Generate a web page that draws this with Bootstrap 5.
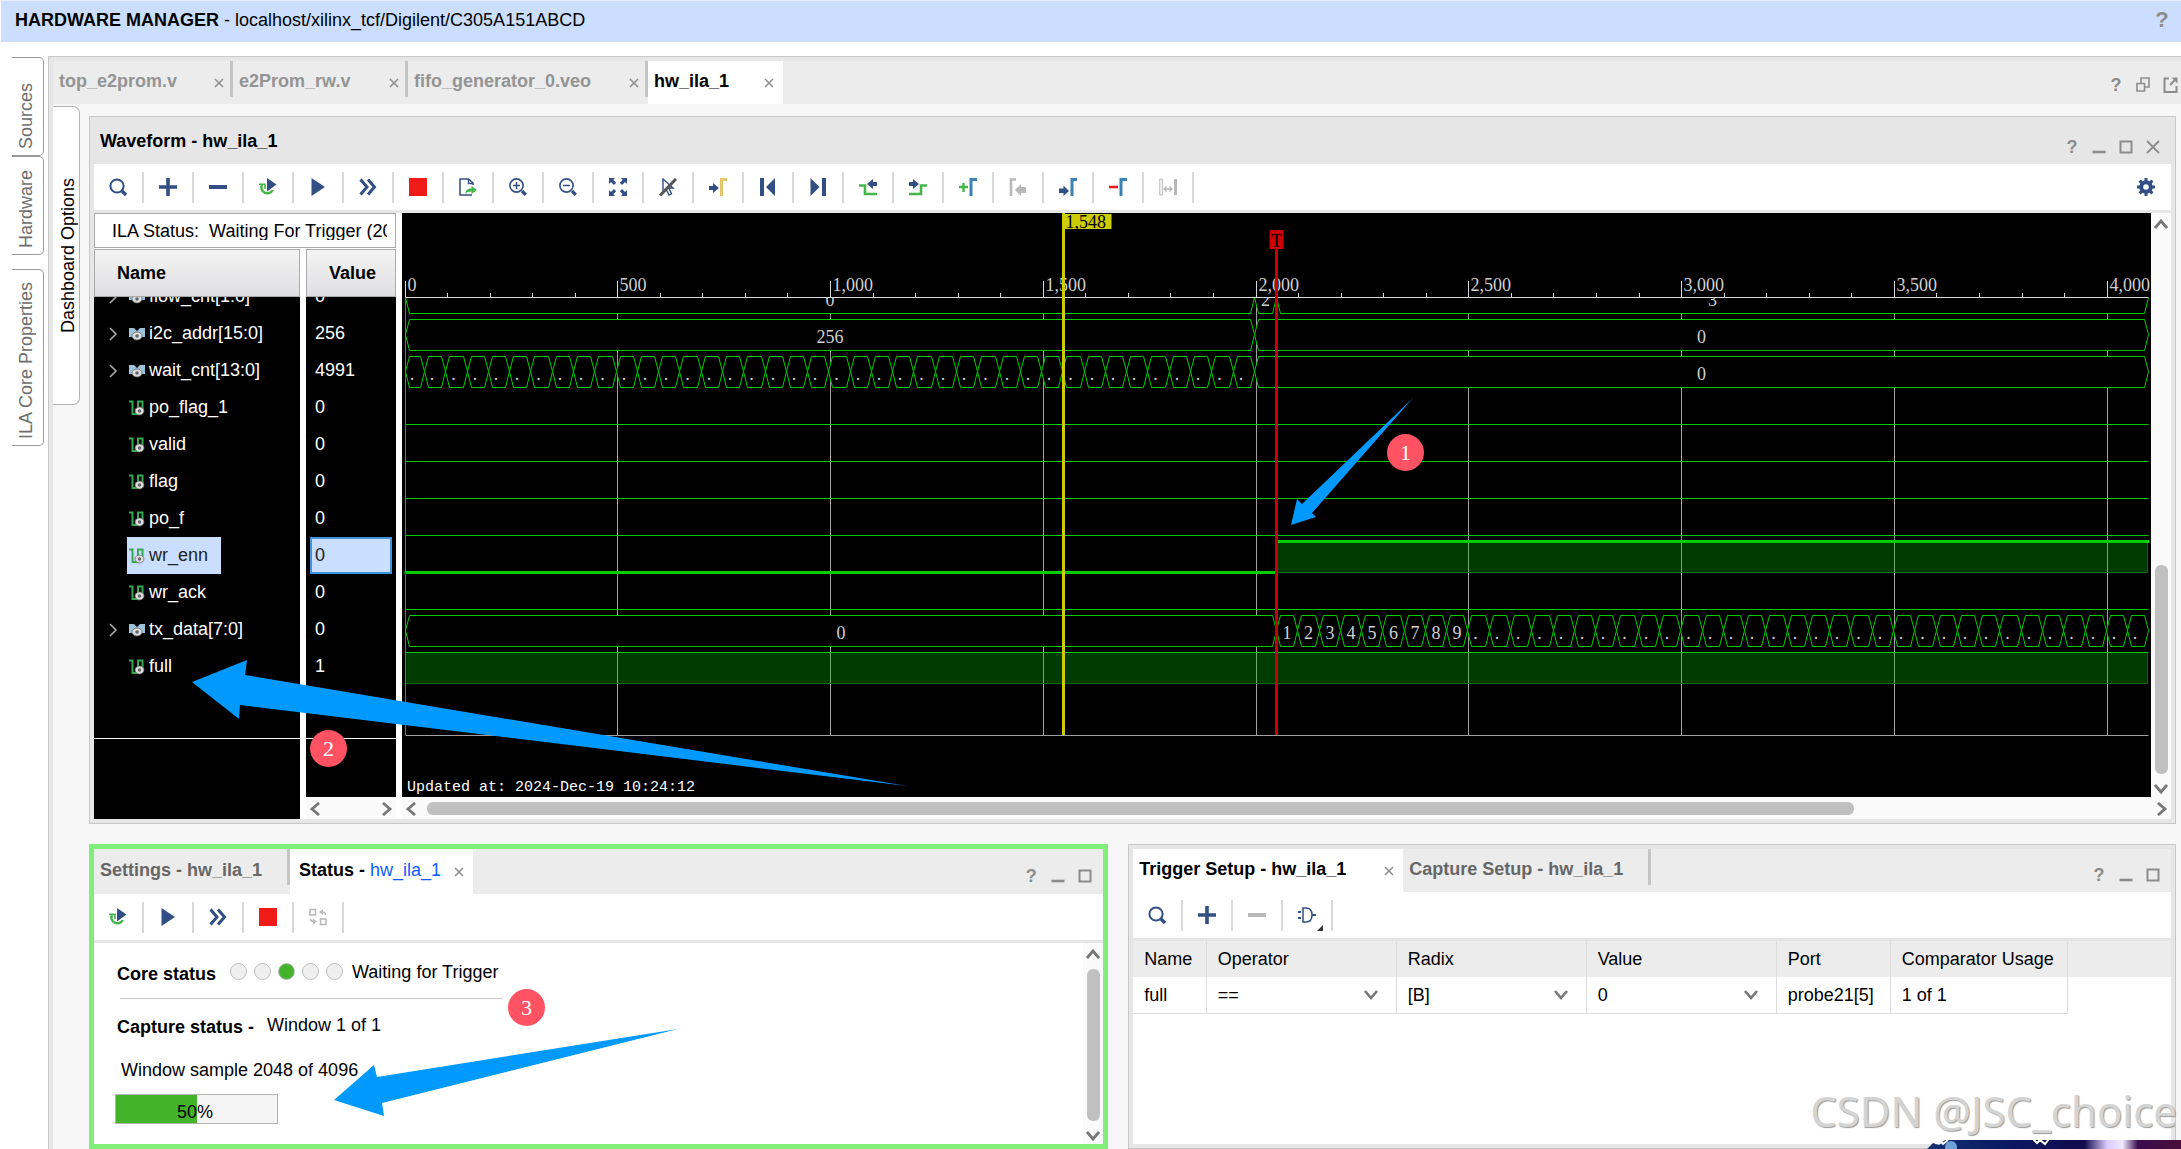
<!DOCTYPE html>
<html lang="en">
<head>
<meta charset="utf-8">
<meta name="viewport" content="width=device-width, initial-scale=1">
<title>Hardware Manager</title>
<link rel="stylesheet" href="https://cdn.jsdelivr.net/npm/bootstrap@5.3.0/dist/css/bootstrap.min.css">
<style>
:root{--navy:#324f85;--edge:#c8c8c8;--frame:#e6e6e6;--strip:#ececec;--go:#00cc00}
body{font-family:"Liberation Sans",Arial,sans-serif;font-size:18px;line-height:22px;color:#000;background:#fff}
button{border:0;background:none;padding:0;color:inherit;line-height:inherit}
svg{display:block;flex:none}
.ic{width:18px;height:18px}
.shrinkable{min-width:0}
.app-title{height:42px;background:#ccdeff;border-top:1px solid #e6efff;padding:0 10px 4px 14px;margin-left:1px}
.helpmark{font-weight:700;color:#8c8c8c;width:18px;text-align:center}
.app-title .helpmark{font-size:22px}
.side{width:48px;padding:15px 5px 0 12px}
.side-tab{border:1px solid #999;border-left:0;border-radius:0 5px 5px 0;color:#6e6e6e;width:32px;height:99px;display:flex;align-items:flex-end;justify-content:center;padding-bottom:6px;padding-right:4px}
.side-tab.tall{height:177px;margin-top:14px}
.side-tab span,.dash-tab span{writing-mode:vertical-rl;transform:rotate(180deg);white-space:nowrap}
.dash-tab{width:27px;height:299px;margin-top:2px;padding-left:3px;background:#fff;border:1px solid #b4b4b4;border-left:0;border-radius:0 7px 7px 0;display:flex;align-items:center;justify-content:center}
.pane{border:1px solid var(--edge);background:var(--frame);padding:4px}
.main-pane{border-width:1px 0 0 1px;padding:4px 0 0 4px;margin-top:14px}
.surface{background:#f7f7f7}
.board{padding:12px 5px 0 9px}
.tabstrip{background:var(--strip);height:43px}
.tab{position:relative;display:flex;align-items:flex-start;justify-content:space-between;padding:9px 9px 0 6px;font-weight:700;color:#949494;height:43px;white-space:nowrap}
.tab.dark-label{color:#666}
.tab.on{background:#fff;color:#000}
.tab.on.inset{padding-left:9px}
.tab a{color:#0d5dff}
.tab.split::after{content:"";position:absolute;right:0;top:0;width:3px;height:36px;background:#c4c4c4}
.close{width:10px;height:10px;color:#8c8c8c;margin-top:8px}
.wctl{gap:9px;color:#8c8c8c;padding-right:9px}
.wctl.edge{padding-right:2px}
.pane-title{height:43px;padding-left:6px;font-weight:700}
.pane-title>span{padding-bottom:3px}
.toolbar{height:46px;background:#fff;color:var(--navy);margin-bottom:3px}
.tool{width:50px;height:31px;border-right:2px solid #d9d9d9;display:flex;align-items:center;justify-content:center;position:relative}
.tool:disabled{color:#b8b8b8}
.wavebody{position:relative;background:#fff;height:606px}
.leftcols{width:302px;margin-right:6px}
.cols{gap:6px}
.ila{height:35px;border:1px solid #aaa;background:#fff;padding:6px 8px 0 17px;margin-bottom:1px}
.ila div{overflow:hidden;white-space:pre;height:20px}
.colhead{height:48px;border:1px solid #aaa;background:linear-gradient(#f4f4f4,#dedee1);font-weight:700;padding:12px 22px}
.names{width:206px}.vals{width:90px}
.list{background:#000;color:#fff;overflow:hidden;position:relative}
.list::after{content:"";position:absolute;left:0;right:0;top:441px;border-top:1px solid #fff}
.rows{margin-top:-19px}
.sig{height:37px;padding-left:11px}
.sig .tw{width:16px;height:16px;margin-right:6px}
.sig .lab{padding:0 13px 0 2px;height:37px;gap:4px}
.sig .lab span{padding-bottom:2px}
.sig.sel .lab{background:#cadeff;color:#222}
.val{height:37px;padding:7px 0 0 9px}
.val.sel{margin:0 4px;padding:5px 0 0 3px;background:#cadeff;color:#222;border:2px solid #3f94dd}
.bar{background:#fafafa;color:#777}
.bar .ic{width:14px;height:14px}
.hbar{height:22px;padding:1px 3px 0;gap:8px}
.vbar{width:20px;padding:5px 0 2px;gap:7px}
.thumb{background:#c0c0c0;border-radius:6px;min-width:13px;min-height:13px}
.wave{background:#000;height:584px;width:100%}
.wave text{font-family:"Liberation Serif",serif;font-size:18px;fill:#d0d0d0}
.wave .ink{fill:#000}
.wave .stamp{font-family:"Liberation Mono",monospace;font-size:15px;fill:#fff}
.note{position:absolute;overflow:visible;pointer-events:none;z-index:3}
.note path{fill:#0099ff}
.note-a{left:1197px;top:185px}.note-b{left:98px;top:447px}.note-c{left:240px;top:180px}
.pin{position:absolute;z-index:4;width:37px;height:37px;border-radius:50%;background:#ff5263;color:#fff;font:22px/37px "Liberation Serif",serif;text-align:center}
.pin-a{left:1293px;top:221px}.pin-b{left:216px;top:517px}.pin-c{left:414px;top:140px}
.lower{gap:20px;margin-top:20px}
.p-left{flex:1019 1 0;border:5px solid #80ef79;position:relative;min-width:0;background:#fff}
.p-right{flex:1048 1 0;min-width:0}
.p-left .tabstrip,.p-left .tab{height:45px}
.p-left .tab{padding-top:10px}
.status-body{border-top:3px solid #e6e6e6}
.lamp{width:17px;height:17px;border-radius:50%;background:#efefef;border:1px solid #bdbdbd}
.lamp.lit{background:#43b32a}
.core{gap:7px;padding:18px 0 16px 23px;height:55px}
.core strong{padding:4px 7px 0 0}
.core .state{padding-left:2px}
.core-rule{width:383px;border-top:1px solid #c8c8c8;margin-left:26px}
.capt{gap:13px;padding:15px 0 0 23px}
.capt strong{padding-top:2px}
.sample{padding:21px 0 0 27px}
.progress.cap{width:163px;height:30px;border:1px solid #b4b4b4;border-radius:0;background:#f5f5f5;position:relative;margin:13px 0 0 21px;font-size:18px}
.cap .progress-bar{background:#43b32a}
.cap b{position:absolute;inset:6px 3px 0 0;text-align:center;color:#000;font-weight:400}
.trig{--bs-table-bg:transparent;margin:0;color:#000;table-layout:fixed;background:#fff}
.trig th,.trig td{height:36px;padding:0 11px;font-weight:400;vertical-align:middle;border:0 solid #dcdcdc;border-right-width:1px;white-space:nowrap;color:#000}
.trig th{background:var(--strip)}
.trig td{border-bottom-width:1px}
.trig th:last-child,.trig td:last-child{border:0}
.c-name{width:73px}.c-pick{width:190px}.c-port{width:114px}.c-use{width:177px}
.trig .form-select{border:0;padding:0 26px 0 0;font-size:18px;line-height:22px;color:#000;background-color:transparent;border-radius:0;background-position:right 6px center;background-size:16px 12px;--bs-form-select-bg-img:url("data:image/svg+xml,%3csvg xmlns='http://www.w3.org/2000/svg' viewBox='0 0 16 12'%3e%3cpath d='M2 2l6 7 6-7' fill='none' stroke='%23777' stroke-width='2.6'/%3e%3c/svg%3e")}
.credit{position:absolute;right:4px;bottom:9px;font:42px/58px "Noto Sans",sans-serif;color:#d4d4d4;text-shadow:1px 1px 1px #999,-1px -1px 0 #fff;white-space:nowrap;z-index:5}
.thumbstrip{position:absolute;right:0;bottom:0;z-index:4}
</style>
</head>
<body class="d-flex flex-column min-vh-100 overflow-hidden position-relative">

<svg width="0" height="0" class="position-absolute" aria-hidden="true">
  <symbol id="i-search" viewBox="0 0 18 18"><circle cx="8" cy="8" r="6.600" fill="none" stroke="currentColor" stroke-width="2"/><path d="M13 13l4 4" stroke="currentColor" stroke-width="3.400"/></symbol>
  <symbol id="i-plus" viewBox="0 0 18 18"><path d="M0 9h18M9 0v18" stroke="currentColor" stroke-width="3.600"/></symbol>
  <symbol id="i-minus" viewBox="0 0 18 18"><path d="M0 9h18" stroke="currentColor" stroke-width="4"/></symbol>
  <symbol id="i-rerun" viewBox="0 0 18 18"><path d="M3 6.500A6 6 0 1 0 13.800 12" fill="none" stroke="#43b649" stroke-width="2.400"/><path d="M0 6.200h6v4.800" fill="none" stroke="#43b649" stroke-width="1.600"/><path d="M8 0l9.500 6.500L8 13.500z" fill="currentColor"/></symbol>
  <symbol id="i-play" viewBox="0 0 18 18"><path d="M2.500 0L16 9 2.500 18z" fill="currentColor"/></symbol>
  <symbol id="i-ff" viewBox="0 0 18 18"><path d="M1.500 1.500L8 9l-6.500 7.500M9 1.500L15.500 9 9 16.500" fill="none" stroke="currentColor" stroke-width="3"/></symbol>
  <symbol id="i-stop" viewBox="0 0 18 18"><path d="M0 0h18v18H0z" fill="#ee1b18"/></symbol>
  <symbol id="i-export" viewBox="0 0 18 18"><path d="M14 7V5L9.500 1H1v16h12" fill="none" stroke="currentColor" stroke-width="1.500"/><path d="M9.500 1v4.500H14" fill="none" stroke="currentColor" stroke-width="1.300"/><path d="M6.500 16c0-4 2-5.500 6-5.500V8l5.500 4-5.500 4v-2.600c-3 0-4.500.6-6 2.600z" fill="#43b649"/></symbol>
  <symbol id="i-zin" viewBox="0 0 18 18"><circle cx="7.500" cy="7.500" r="6.600" fill="none" stroke="currentColor" stroke-width="1.600"/><path d="M4 7.500h7M7.500 4v7" stroke="currentColor" stroke-width="1.500"/><path d="M13 13l3.800 3.800" stroke="currentColor" stroke-width="3.200"/></symbol>
  <symbol id="i-zout" viewBox="0 0 18 18"><circle cx="7.500" cy="7.500" r="6.600" fill="none" stroke="currentColor" stroke-width="1.600"/><path d="M4 7.500h7" stroke="currentColor" stroke-width="1.500"/><path d="M13 13l3.800 3.800" stroke="currentColor" stroke-width="3.200"/></symbol>
  <symbol id="i-fit" viewBox="0 0 18 18"><path d="M0 0h6L4.300 1.800 7.200 4.700 4.900 7 2 4.100 0 6zM18 0v6l-2-1.900L13.100 7l-2.300-2.300 2.900-2.900L12 0zM0 18v-6l2 1.900L4.900 11l2.300 2.300-2.900 2.900L6 18zM18 18h-6l1.700-1.800-2.900-2.900 2.300-2.300 2.900 2.900L18 12z" fill="currentColor"/></symbol>
  <symbol id="i-nocursor" viewBox="0 0 18 18"><path d="M4 1v13l3-3 3 6 2.500-1.300L9.800 10H14z" fill="none" stroke="currentColor" stroke-width="1.400"/><path d="M1 17.500L17 1" stroke="#555" stroke-width="3"/></symbol>
  <symbol id="i-tocursor" viewBox="0 0 18 18"><path d="M0 8h4V5l6 5-6 5v-3H0z" fill="currentColor"/><path d="M12.500 18V1.500H18" fill="none" stroke="#e2c766" stroke-width="3"/></symbol>
  <symbol id="i-first" viewBox="0 0 18 18"><path d="M1 0h4v18H1zM16 0v18L7 9z" fill="currentColor"/></symbol>
  <symbol id="i-last" viewBox="0 0 18 18"><path d="M13 0h4v18h-4zM1.500 0v18l9-9z" fill="currentColor"/></symbol>
  <symbol id="i-prevtr" viewBox="0 0 18 18"><path d="M18 4h-4V1L8 6l6 5V8h4z" fill="currentColor"/><path d="M0 7.500h6V16h12" fill="none" stroke="#43b649" stroke-width="2.600"/></symbol>
  <symbol id="i-nexttr" viewBox="0 0 18 18"><path d="M0 4h4V1l6 5-6 5V8H0z" fill="currentColor"/><path d="M0 16h12V7.500h6" fill="none" stroke="#43b649" stroke-width="2.600"/></symbol>
  <symbol id="i-addmk" viewBox="0 0 18 18"><path d="M0 9h9M4.500 5v9" stroke="#43b649" stroke-width="2.400"/><path d="M12 18V1.500h6" fill="none" stroke="#3a82b5" stroke-width="3"/></symbol>
  <symbol id="i-prevmk" viewBox="0 0 18 18"><path d="M2 18V1.500h5" fill="none" stroke="currentColor" stroke-width="2.600"/><path d="M17 9h-5V6l-6 6 6 6v-3h5z" fill="currentColor"/></symbol>
  <symbol id="i-nextmk" viewBox="0 0 18 18"><path d="M0 10.500h4.500v-3L10 13l-5.500 5v-3H0z" fill="currentColor"/><path d="M13 18V1.500h5" fill="none" stroke="#3a82b5" stroke-width="3"/></symbol>
  <symbol id="i-delmk" viewBox="0 0 18 18"><path d="M0 9h9" stroke="#ee1b24" stroke-width="2.600"/><path d="M12 18V1.500h6" fill="none" stroke="#3a82b5" stroke-width="3"/></symbol>
  <symbol id="i-span" viewBox="0 0 18 18"><path d="M.8 1h2.500v16H.8z" fill="none" stroke="currentColor"/><path d="M15 1h3v16h-3z" fill="currentColor"/><path d="M5 11h8M7.500 8.500L5 11l2.500 2.500M10.500 8.500L13 11l-2.500 2.500" fill="none" stroke="currentColor" stroke-width="1.300"/></symbol>
  <symbol id="i-gear" viewBox="0 0 18 18"><circle cx="9" cy="9" r="4.800" fill="none" stroke="currentColor" stroke-width="4"/><path d="M9 0v4M9 14v4M0 9h4M14 9h4M2.600 2.600l3 3M12.400 12.400l3 3M2.600 15.400l3-3M12.400 5.600l3-3" stroke="currentColor" stroke-width="3"/></symbol>
  <symbol id="i-swap" viewBox="0 0 18 18"><path d="M1 1.500h5.500V7H1zM11.500 11H17v5.500h-5.500z" fill="none" stroke="currentColor" stroke-width="1.600"/><path d="M16.500 7c0-2-1-3-4-3M1.500 11c0 2 1 2.500 4 2.500" fill="none" stroke="currentColor" stroke-width="1.600"/><path d="M10 4l4-3v6zM8 13.500l-4-3v6z" fill="currentColor"/></symbol>
  <symbol id="i-gate" viewBox="0 0 18 18"><path d="M5 2h3c4 0 6 3 6 7s-2 7-6 7H5z" fill="none" stroke="currentColor" stroke-width="1.500"/><path d="M14 9h4M0 6h3M0 12h3" stroke="currentColor" stroke-width="2"/></symbol>
  <symbol id="i-x" viewBox="0 0 10 10"><path d="M1 1l8 8M9 1l-8 8" stroke="currentColor" stroke-width="1.500"/></symbol>
  <symbol id="i-bigx" viewBox="0 0 18 18"><path d="M3 3l12 12M15 3L3 15" stroke="currentColor" stroke-width="1.800"/></symbol>
  <symbol id="i-min" viewBox="0 0 18 18"><path d="M2.500 14h13" stroke="currentColor" stroke-width="2.600"/></symbol>
  <symbol id="i-max" viewBox="0 0 18 18"><path d="M3.500 3.500h11v11h-11z" fill="none" stroke="currentColor" stroke-width="2"/></symbol>
  <symbol id="i-restore" viewBox="0 0 18 18"><path d="M3 7.500h7.500V15H3z" fill="none" stroke="currentColor" stroke-width="1.600"/><path d="M7 7V2h8v9h-4" fill="none" stroke="currentColor" stroke-width="1.600"/></symbol>
  <symbol id="i-pop" viewBox="0 0 18 18"><path d="M8 2.500H3.500V16h12V10" fill="none" stroke="currentColor" stroke-width="2"/><path d="M9 9l5-5" stroke="currentColor" stroke-width="2"/><path d="M10.500 1.500h6v6z" fill="currentColor"/></symbol>
  <symbol id="i-up" viewBox="0 0 14 14"><path d="M1 10l6-7 6 7" fill="none" stroke="currentColor" stroke-width="2.800"/></symbol>
  <symbol id="i-down" viewBox="0 0 14 14"><path d="M1 4l6 7 6-7" fill="none" stroke="currentColor" stroke-width="2.800"/></symbol>
  <symbol id="i-left" viewBox="0 0 14 14"><path d="M10 1L3 7l7 6" fill="none" stroke="currentColor" stroke-width="2.800"/></symbol>
  <symbol id="i-right" viewBox="0 0 14 14"><path d="M4 1l7 6-7 6" fill="none" stroke="currentColor" stroke-width="2.800"/></symbol>
  <symbol id="i-tw" viewBox="0 0 16 16"><path d="M5 2l6 6-6 6" fill="none" stroke="#aaa" stroke-width="1.600"/></symbol>
  <symbol id="i-bus" viewBox="0 0 16 16"><path d="M0 2h5l3 3 3-3h5v9h-4l-4-2-4 2H0z" fill="#9cc3dc"/><ellipse cx="8" cy="10" rx="5" ry="4" fill="#ddd" stroke="#666" stroke-width=".8"/><circle cx="8" cy="10" r="1.800" fill="#666"/></symbol>
  <symbol id="i-bit" viewBox="0 0 16 16"><path d="M0 1.500h3.500V14H9V1.500h4.500V12" fill="none" stroke="#36a852" stroke-width="2"/><ellipse cx="10.500" cy="11" rx="4.500" ry="4" fill="#ddd" stroke="#666" stroke-width=".8"/><circle cx="10.500" cy="11" r="1.700" fill="#666"/></symbol>
</svg>

<header class="app-title d-flex align-items-center justify-content-between">
  <div><strong>HARDWARE MANAGER</strong> - localhost/xilinx_tcf/Digilent/C305A151ABCD</div>
  <button class="helpmark" aria-label="Help">?</button>
</header>

<div class="d-flex flex-grow-1">
  <nav class="side flex-shrink-0" aria-label="Side views">
    <button class="side-tab"><span>Sources</span></button>
    <button class="side-tab"><span>Hardware</span></button>
    <button class="side-tab tall"><span>ILA Core Properties</span></button>
  </nav>

  <main class="pane main-pane shrinkable flex-grow-1 d-flex flex-column">
    <div class="tabstrip d-flex align-items-center justify-content-between">
      <div class="d-flex" id="filetabs"></div>
      <div class="d-flex align-items-center wctl edge pt-1">
        <button class="helpmark" aria-label="Help">?</button>
        <button aria-label="Restore"><svg class="ic"><use href="#i-restore"/></svg></button>
        <button aria-label="Pop out"><svg class="ic"><use href="#i-pop"/></svg></button>
      </div>
    </div>

    <div class="surface flex-grow-1 d-flex">
      <button class="dash-tab flex-shrink-0"><span>Dashboard Options</span></button>
      <div class="board shrinkable flex-grow-1 d-flex flex-column">

        <section class="pane">
          <div class="pane-title d-flex align-items-center justify-content-between">
            <span>Waveform - hw_ila_1</span>
            <div class="d-flex align-items-center wctl pt-2">
              <button class="helpmark" aria-label="Help">?</button>
              <button aria-label="Minimize"><svg class="ic"><use href="#i-min"/></svg></button>
              <button aria-label="Maximize"><svg class="ic"><use href="#i-max"/></svg></button>
              <button aria-label="Close"><svg class="ic"><use href="#i-bigx"/></svg></button>
            </div>
          </div>
          <div class="toolbar d-flex align-items-center">
            <div class="d-flex" id="wavetools"></div>
            <button class="ms-auto me-3" aria-label="Settings"><svg class="ic"><use href="#i-gear"/></svg></button>
          </div>

          <div class="wavebody d-flex">
            <div class="leftcols d-flex flex-column flex-shrink-0">
              <div class="ila"><div>ILA Status:  Waiting For Trigger (2048 out of 4096)</div></div>
              <div class="cols d-flex flex-grow-1">
                <div class="names d-flex flex-column">
                  <div class="colhead">Name</div>
                  <div class="list flex-grow-1"><div class="rows" id="names"></div></div>
                </div>
                <div class="vals d-flex flex-column">
                  <div class="colhead">Value</div>
                  <div class="list flex-grow-1"><div class="rows" id="vals"></div></div>
                  <div class="bar hbar d-flex align-items-center justify-content-between">
                    <button aria-label="Scroll left"><svg class="ic"><use href="#i-left"/></svg></button>
                    <button aria-label="Scroll right"><svg class="ic"><use href="#i-right"/></svg></button>
                  </div>
                </div>
              </div>
            </div>
            <div class="shrinkable flex-grow-1 d-flex flex-column">
              <div class="d-flex">
                <div class="shrinkable flex-grow-1"><svg class="wave" id="wave" role="img" aria-label="Waveform"></svg></div>
                <div class="bar vbar d-flex flex-column align-items-center">
                  <button aria-label="Scroll up"><svg class="ic"><use href="#i-up"/></svg></button>
                  <div class="flex-grow-1 d-flex align-items-end"><div class="thumb" style="height:39%"></div></div>
                  <button aria-label="Scroll down"><svg class="ic"><use href="#i-down"/></svg></button>
                </div>
              </div>
              <div class="bar hbar d-flex align-items-center">
                <button aria-label="Scroll left"><svg class="ic"><use href="#i-left"/></svg></button>
                <div class="flex-grow-1"><div class="thumb" style="width:83%"></div></div>
                <button aria-label="Scroll right"><svg class="ic"><use href="#i-right"/></svg></button>
              </div>
            </div>
            <svg class="note note-a" width="123" height="128"><path d="M0 127L6 101l5 5L122 0 21 115l4 4z"/></svg>
            <svg class="note note-b" width="716" height="127"><path d="M0 22L55 0l-2 15L715 126 48 45l-1 14z"/></svg>
            <div class="pin pin-a">1</div>
            <div class="pin pin-b">2</div>
          </div>
        </section>

        <div class="lower d-flex flex-grow-1">
          <section class="p-left d-flex flex-column">
            <div class="tabstrip d-flex align-items-center justify-content-between">
              <div class="d-flex">
                <div class="tab dark-label split" style="width:196px"><span>Settings - hw_ila_1</span></div>
                <div class="tab on inset" style="width:183px"><span>Status - <a href="#" class="text-decoration-none fw-normal">hw_ila_1</a></span><button class="close" aria-label="Close tab"><svg width="10" height="10"><use href="#i-x"/></svg></button></div>
              </div>
              <div class="d-flex align-items-center wctl pt-2">
                <button class="helpmark" aria-label="Help">?</button>
                <button aria-label="Minimize"><svg class="ic"><use href="#i-min"/></svg></button>
                <button aria-label="Maximize"><svg class="ic"><use href="#i-max"/></svg></button>
              </div>
            </div>
            <div class="toolbar d-flex align-items-center m-0" id="stattools"></div>
            <div class="status-body d-flex flex-grow-1">
              <div class="flex-grow-1">
                <div class="core d-flex align-items-center">
                  <strong>Core status</strong>
                  <span class="lamp"></span><span class="lamp"></span><span class="lamp lit"></span><span class="lamp"></span><span class="lamp"></span>
                  <span class="state">Waiting for Trigger</span>
                </div>
                <div class="core-rule"></div>
                <div class="capt d-flex"><strong>Capture status -</strong><span>Window 1 of 1</span></div>
                <div class="sample">Window sample 2048 of 4096</div>
                <div class="progress cap" role="progressbar" aria-label="Window sample" aria-valuenow="50" aria-valuemin="0" aria-valuemax="100"><div class="progress-bar" style="width:50%"></div><b>50%</b></div>
              </div>
              <div class="bar vbar d-flex flex-column align-items-center">
                <button aria-label="Scroll up"><svg class="ic"><use href="#i-up"/></svg></button>
                <div class="flex-grow-1 d-flex"><div class="thumb"></div></div>
                <button aria-label="Scroll down"><svg class="ic"><use href="#i-down"/></svg></button>
              </div>
            </div>
            <svg class="note note-c" width="345" height="87"><path d="M0 71L40 36l3 12L344 0 48 74l2 13z"/></svg>
            <div class="pin pin-c">3</div>
          </section>

          <section class="pane p-right d-flex flex-column">
            <div class="tabstrip d-flex align-items-center justify-content-between">
              <div class="d-flex">
                <div class="tab on" style="width:270px"><span>Trigger Setup - hw_ila_1</span><button class="close" aria-label="Close tab"><svg width="10" height="10"><use href="#i-x"/></svg></button></div>
                <div class="tab dark-label split" style="width:248px"><span>Capture Setup - hw_ila_1</span></div>
              </div>
              <div class="d-flex align-items-center wctl pt-2">
                <button class="helpmark" aria-label="Help">?</button>
                <button aria-label="Minimize"><svg class="ic"><use href="#i-min"/></svg></button>
                <button aria-label="Maximize"><svg class="ic"><use href="#i-max"/></svg></button>
              </div>
            </div>
            <div class="toolbar d-flex align-items-center" id="trigtools"></div>
            <div class="flex-grow-1 bg-white">
              <table class="table trig">
                <thead><tr><th class="c-name">Name</th><th class="c-pick">Operator</th><th class="c-pick">Radix</th><th class="c-pick">Value</th><th class="c-port">Port</th><th class="c-use">Comparator Usage</th><th></th></tr></thead>
                <tbody><tr><td>full</td>
                  <td><select class="form-select" aria-label="Operator"><option>==</option><option>!=</option></select></td>
                  <td><select class="form-select" aria-label="Radix"><option>[B]</option><option>[H]</option></select></td>
                  <td><select class="form-select" aria-label="Value"><option>0</option><option>1</option></select></td>
                  <td>probe21[5]</td><td>1 of 1</td><td></td></tr></tbody>
              </table>
            </div>
          </section>
        </div>
      </div>
    </div>
  </main>
</div>

<svg class="thumbstrip" width="256" height="10" viewBox="0 0 256 10" aria-hidden="true">
  <defs><linearGradient id="sky"><stop offset="0" stop-color="#12306f"/><stop offset=".3" stop-color="#0a1a63"/><stop offset=".62" stop-color="#120a4c"/><stop offset=".71" stop-color="#d9ccff"/><stop offset=".77" stop-color="#f0e8ff"/><stop offset=".83" stop-color="#3a0d4e"/><stop offset="1" stop-color="#4a0d3a"/></linearGradient></defs>
  <path d="M2 10L8 4l6 2 6-5h236v9z" fill="url(#sky)"/><circle cx="26" cy="8" r="6" fill="#6fa0d8"/><path d="M8 1l3 3 3-3 4 4 5-4M108 0l4 4 3-3 5 4 4-5" stroke="#fff" stroke-width="2" fill="none"/>
</svg>
<div class="credit">CSDN @JSC_choice</div>

<script src="https://cdn.jsdelivr.net/npm/bootstrap@5.3.0/dist/js/bootstrap.bundle.min.js"></script>
<script>
const $ = id => document.getElementById(id);

// editor tabs: label, width
$('filetabs').innerHTML = [['top_e2prom.v',180],['e2Prom_rw.v',175],['fifo_generator_0.veo',240],['hw_ila_1',135]]
  .map(([t,w],i) => `<div class="tab ${i==3?'on':'split'}" style="width:${w}px"><span>${t}</span><button class="close" aria-label="Close ${t}"><svg width="10" height="10"><use href="#i-x"/></svg></button></div>`).join('');

// toolbars: icon names, a leading "-" marks a disabled tool
const tools = (id, list) => $(id).innerHTML = list.split(' ').map(n => {
  const off = n[0] == '-'; if (off) n = n.slice(1);
  const corner = n == 'gate' ? '<svg class="position-absolute bottom-0 end-0 me-2" width="6" height="6"><path d="M6 0v6H0z" fill="#333"/></svg>' : '';
  return `<button class="tool" aria-label="${n}" ${off?'disabled':''}><svg class="ic"><use href="#i-${n}"/></svg>${corner}</button>`;
}).join('');
tools('wavetools','search plus minus rerun play ff stop export zin zout fit nocursor tocursor first last prevtr nexttr addmk -prevmk nextmk delmk -span');
tools('stattools','rerun play ff stop -swap');
tools('trigtools','search plus -minus gate');

// probes: name, value, is a bus
const probes = [['flow_cnt[1:0]','0',1],['i2c_addr[15:0]','256',1],['wait_cnt[13:0]','4991',1],['po_flag_1','0'],['valid','0'],['flag','0'],['po_f','0'],['wr_enn','0'],['wr_ack','0'],['tx_data[7:0]','0',1],['full','1']];
$('names').innerHTML = probes.map(([n,v,b]) => `<div class="sig d-flex align-items-center ${n=='wr_enn'?'sel':''}"><svg class="tw">${b?'<use href="#i-tw"/>':''}</svg><div class="lab d-flex align-items-center"><svg width="16" height="16"><use href="#i-${b?'bus':'bit'}"/></svg><span>${n}</span></div></div>`).join('');
$('vals').innerHTML = probes.map(([n,v]) => `<div class="val ${n=='wr_enn'?'sel':''}">${v}</div>`).join('');

// waveform canvas, redrawn for the width at hand
function draw() {
  const W = $('wave').clientWidth, k = (W - 6) / 4096;
  const X = v => Math.floor(3 + v * k) + .5, top = r => 69.5 + 37 * r;
  let s = '';
  const line = (x1,y1,x2,y2,c,w=1) => s += `<path d="M${x1} ${y1}L${x2} ${y2}" stroke="${c}" stroke-width="${w}"/>`;
  const text = (x,y,t,a='middle',c='') => s += `<text x="${x}" y="${y}" text-anchor="${a}" class="${c}">${t}</text>`;
  for (let v = 0; v <= 4000; v += 500) line(X(v),84,X(v),522,'#a0a0a0');
  line(X(0),522.5,X(4096),522.5,'#a0a0a0');
  const cell = (r,a,b,t) => {
    const x1 = X(a), x2 = X(b), y1 = top(r), y2 = y1 + 31, m = y1 + 15;
    s += `<path d="M${x1} ${m}L${x1+4} ${y1}H${x2-4}L${x2} ${m}L${x2-4} ${y2}H${x1+4}z" fill="#000" stroke="#00cc00"/>`;
    if (t === '.') text((x1+x2)/2-3, y2-8, t); else text((x1+x2)/2, y2-8, t);
  };
  s += '<g clip-path="url(#below)">';
  cell(0,0,1996,0); cell(0,1996,2048,2); cell(0,2048,4096,3);
  s += '</g>';
  cell(1,0,1996,256); cell(1,1996,4096,0);
  cell(2,0,46,'.');
  for (let v = 46; v < 1996; v += 50) cell(2,v,v+50,'.');
  cell(2,1996,4096,0);
  for (const r of [3,4,5,6,8]) line(X(0),top(r)+31,X(4096),top(r)+31,'#00cc00');
  const high = (a,r) => s += `<rect x="${X(a)}" y="${top(r)}" width="${X(4096)-X(a)-1}" height="31" fill="#00c800" fill-opacity=".3" stroke="#006a00"/>`;
  high(2048,7); line(X(0)-1,359.5,X(2048),359.5,'#00cc00',3); line(X(2048),328.5,X(4096)+1,328.5,'#00cc00',3);
  cell(9,0,2048,0);
  for (let i = 0; i < 41; i++) cell(9,2048+50*i,Math.min(4096,2098+50*i), i < 9 ? i+1 : '.');
  high(0,10); line(X(0),439.5,X(4096),439.5,'#00cc00');
  line(X(0),69,X(0),522,'#707070');
  line(X(0),84.5,X(4096),84.5,'#d8d8d8');
  for (let v = 0; v <= 4096; v += 100) line(X(v),v%500?80:68,X(v),84,'#d8d8d8');
  for (let v = 0; v <= 4000; v += 500) text(X(v)+2,78,v.toLocaleString('en-US'),'start');
  line(X(1548),0,X(1548),522,'#cccc00',3);
  s += `<rect x="${X(1548)-1}" y="1" width="49" height="15" fill="#cccc00"/>`;
  text(X(1548)+2,15,'1,548','start','ink');
  line(X(2048),18,X(2048),522,'#cc0000',3);
  s += `<rect x="${X(2048)-7}" y="17" width="14" height="19" fill="#cc0000"/>`;
  text(X(2048),34,'T','middle','ink');
  text(5,578,'Updated at: 2024-Dec-19 10:24:12','start','stamp');
  $('wave').innerHTML = '<defs><clipPath id="below"><rect y="85" width="100%" height="60"/></clipPath></defs>' + s;
}
draw(); addEventListener('resize', draw);
</script>
</body>
</html>
